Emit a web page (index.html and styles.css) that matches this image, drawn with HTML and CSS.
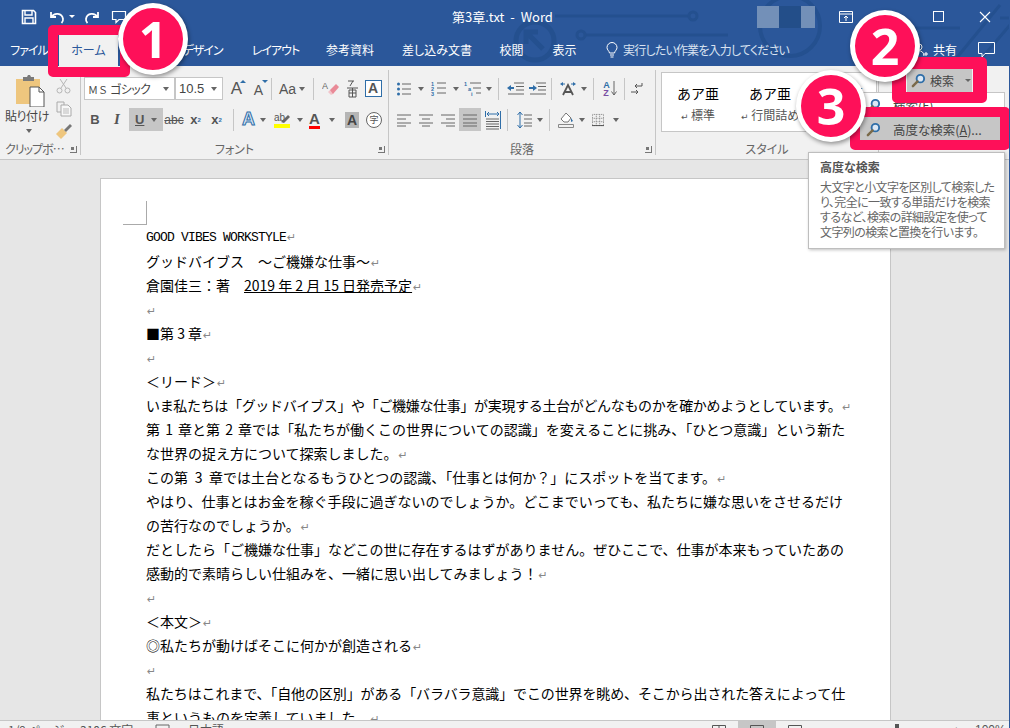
FILE: index.html

```html
<!DOCTYPE html>
<html lang="ja">
<head>
  <meta charset="UTF-8">
  <title>第3章.txt - Word</title>
  <link rel="stylesheet" href="styles.css">
</head>
<body>

<svg class="sprite" xmlns="http://www.w3.org/2000/svg">
  <symbol id="i-find" viewBox="0 0 16 16">
    <circle cx="10" cy="6" r="4" fill="#dbe7f4" stroke="#2f6ea8" stroke-width="2"/>
    <path d="M7 9 2 14" stroke="#7a6a4a" stroke-width="2.6" stroke-linecap="round"/>
  </symbol>
  <symbol id="i-left" viewBox="0 0 16 16"><path d="M1 3h14M1 7h9M1 11h14M1 14h9" stroke="#666" fill="none"/></symbol>
  <symbol id="i-center" viewBox="0 0 16 16"><path d="M1 3h14M4 7h8M1 11h14M4 14h8" stroke="#666" fill="none"/></symbol>
  <symbol id="i-right" viewBox="0 0 16 16"><path d="M1 3h14M6 7h9M1 11h14M6 14h9" stroke="#666" fill="none"/></symbol>
  <symbol id="i-just" viewBox="0 0 16 16"><path d="M1 3h14M1 7h14M1 11h14M1 14h14" stroke="#666" fill="none"/></symbol>
</svg>

<div class="app">
  <div class="head">
    <svg class="circuit" width="1010" height="66" viewBox="0 0 1010 66" fill="none" stroke="#24508f" stroke-width="3">
      <circle cx="535" cy="41" r="19" stroke-width="5"/>
      <path d="M543 49 527 33M526 44V32h12" stroke-width="5"/>
      <path d="M555 16H690M586 35H728"/>
      <circle cx="581" cy="35" r="4"/>
      <circle cx="693" cy="16" r="4"/>
      <circle cx="790" cy="26" r="30" stroke-width="4"/>
      <path d="M905 28H960M950 66 1000 5M975 66 1010 25M1000 18h10"/>
    </svg>
    <header class="titlebar">
      <div class="qat">
        <svg class="qat-save" width="16" height="16" viewBox="0 0 16 16"><path d="M1.500 1.500h11l2 2v11h-13z" fill="none" stroke="#fff" stroke-width="1.6"/><path d="M4 2v4h7V2M4 14V9h8v5" fill="none" stroke="#fff" stroke-width="1.4"/></svg>
        <svg class="qat-undo" width="16" height="16" viewBox="0 0 16 16"><path d="M2 3v5h5M2.500 8C5 3.500 13 3.500 14 10c.2 1.500-.5 3-1.500 4" fill="none" stroke="#fff" stroke-width="1.8"/></svg>
        <span class="caret caret-white qat-caret"></span>
        <svg class="qat-redo" width="16" height="16" viewBox="0 0 16 16"><path d="M14 3v5H9M13.500 8C11 3.500 3 3.500 2 10c-.2 1.500.5 3 1.500 4" fill="none" stroke="#fff" stroke-width="1.8"/></svg>
        <svg class="qat-touch" width="16" height="16" viewBox="0 0 16 16"><path d="M1.500 2.500h13v8H8l-3 3v-3H1.500z" fill="none" stroke="#fff" stroke-width="1.200"/></svg>
      </div>
      <div class="doc-title">第3章.txt&nbsp; - &nbsp;Word</div>
      <div class="account"><i class="blur-a"></i><i class="blur-b"></i><i class="blur-a narrow"></i></div>
      <div class="winctl">
        <svg width="14" height="12" viewBox="0 0 14 12"><path d="M.5.500h13v11H.5zM.5 3h13M7 10V5M5 7l2-2 2 2" fill="none" stroke="#fff"/></svg>
        <svg class="win-max" width="11" height="11" viewBox="0 0 11 11"><rect x=".5" y=".5" width="10" height="10" fill="none" stroke="#fff"/></svg>
        <svg class="win-close" width="12" height="12" viewBox="0 0 12 12"><path d="M1 1l10 10M11 1 1 11" stroke="#fff" stroke-width="1.100"/></svg>
      </div>
    </header>

    <nav class="tabs">
      <span class="tab t-file kana">ファイル</span>
      <span class="tab t-home active">ホーム</span>
      <span class="tab t-ins">挿入</span>
      <span class="tab t-des kana">デザイン</span>
      <span class="tab t-lay kana">レイアウト</span>
      <span class="tab t-ref">参考資料</span>
      <span class="tab t-mail">差し込み文書</span>
      <span class="tab t-rev">校閲</span>
      <span class="tab t-view">表示</span>
      <span class="tell">
        <svg width="12" height="16" viewBox="0 0 12 16"><path d="M3.500 11C3 8.500 1 8 1 5.500a5 5 0 0 1 10 0C11 8 9 8.500 8.500 11zM4 13h4M4.500 15h3" fill="none" stroke="#fff"/></svg>
        実行したい作業を入力してください
      </span>
      <span class="share">
        <svg width="14" height="14" viewBox="0 0 14 14"><circle cx="5" cy="4" r="3" fill="none" stroke="#fff"/><path d="M0 13c0-7 10-7 10 0M10 11h4M12 9v4" fill="none" stroke="#fff"/></svg>
        共有
      </span>
      <svg class="comment" width="17" height="16" viewBox="0 0 17 16"><path d="M.5.500h16v11H7l-3 3.500v-3.500H.5z" fill="none" stroke="#fff"/></svg>
    </nav>
  </div>

  <section class="ribbon">
    <div class="group g-clip">
      <div class="clip-body">
        <div class="paste">
          <svg class="paste-icon" width="30" height="32" viewBox="0 0 30 32">
            <path d="M1 4h24v25H1z" fill="#eec67e"/>
            <path d="M8 2h4l1-2h2l1 2h3v4H8z" fill="#7a7a7a"/>
            <path d="M15 12h9l5 5v15H15z" fill="#fff" stroke="#555"/>
            <path d="M24 12v5h5" fill="none" stroke="#555"/>
          </svg>
          <span class="paste-label">貼り付け</span>
          <span class="caret"></span>
        </div>
        <div class="clip-side">
          <svg width="15" height="15" viewBox="0 0 15 15"><circle cx="3.500" cy="11.500" r="2.500" fill="none" stroke="#b5b5b5"/><circle cx="11.500" cy="11.500" r="2.500" fill="none" stroke="#b5b5b5"/><path d="M5 9 11 0M10 9 4 0" stroke="#b5b5b5"/></svg>
          <svg width="16" height="16" viewBox="0 0 16 16"><path d="M1 1h7v3M1 1v10h4" fill="none" stroke="#aaa"/><path d="M5 4h7l3 3v8H5z" fill="#f8f8f8" stroke="#aaa"/><path d="M7 8h6M7 10h6M7 12h6" stroke="#bbb"/></svg>
          <svg width="16" height="15" viewBox="0 0 16 15"><path d="M6 4 0 10l5 5 6-6z" fill="#eec67e"/><path d="M8 6 14 0l2 2-6 6z" fill="#777"/></svg>
        </div>
      </div>
      <div class="group-label">クリップボ… <span class="launcher"></span></div>
    </div>

    <div class="group g-font">
      <div class="row">
        <span class="combo c-name"><span><span class="ms">ＭＳ</span> ゴシック</span><span class="caret"></span></span>
        <span class="combo c-size">10.5<span class="caret"></span></span>
        <span class="tool w21 ml3 big-a">A<b class="up"></b></span>
        <span class="tool w21 ml1 big-a small">A<b class="down"></b></span>
        <span class="sep s-d"></span>
        <span class="tool w30 aa">Aa<span class="caret"></span></span>
        <span class="sep"></span>
        <span class="tool w22">
          <svg width="17" height="16" viewBox="0 0 17 16"><path d="M8 9 14 3l3 3-6 7H8z" fill="#e98a97"/><path d="M8 9l-2 2 3 3 2-1z" fill="#f2c4ca"/><text x="0" y="8" class="svg-a">A</text></svg>
        </span>
        <span class="tool w22"><svg width="13" height="19" viewBox="0 0 13 19"><path d="M2 2h6M7 2 4 7" stroke="#555" fill="none"/><path d="M1 9h11M3 11h7v7H3zM3 14h7M6.500 9v9" stroke="#555" fill="none"/></svg></span>
        <span class="tool w20"><span class="boxed-a">A</span></span>
      </div>
      <div class="row r2">
        <span class="tool w22 fmt">B</span>
        <span class="tool w22 fmt it">I</span>
        <span class="tool w34 on fmt ul ml1"><u>U</u><span class="caret"></span></span>
        <span class="tool w22 strike">abc</span>
        <span class="tool w21 fmt sm">x<sub>2</sub></span>
        <span class="tool w21 fmt sm">x<sup>2</sup></span>
        <span class="sep"></span>
        <span class="tool w30 glow">A<span class="caret"></span></span>
        <span class="tool w34 ml2">
          <svg width="16" height="16" viewBox="0 0 16 16"><text x="0" y="9" class="svg-ab">ab</text><path d="M7 10 14 3l2 2-6 6z" fill="#666"/><path d="M0 12h16v4H0z" fill="#ff0"/></svg>
          <span class="caret"></span>
        </span>
        <span class="tool w34 color-a">
          <span class="a-red">A</span>
          <span class="caret"></span>
        </span>
        <span class="tool w22 ml2"><span class="shaded-a">A</span></span>
        <span class="ji">字</span>
      </div>
      <div class="group-label">フォント <span class="launcher"></span></div>
    </div>

    <div class="group g-para">
      <div class="row">
        <span class="tool w34 left">
          <svg width="14" height="14" viewBox="0 0 14 14"><path d="M5 2h9M5 7h9M5 12h9" stroke="#666"/><circle cx="1.500" cy="2" r="1.500" fill="#2f6ea8"/><circle cx="1.500" cy="7" r="1.500" fill="#2f6ea8"/><circle cx="1.500" cy="12" r="1.500" fill="#2f6ea8"/></svg>
          <span class="caret"></span>
        </span>
        <span class="tool w33 left">
          <svg width="15" height="15" viewBox="0 0 15 15"><path d="M6 2h9M6 7h9M6 12h9" stroke="#666"/><text x="0" y="4.500" class="svg-n">1</text><text x="0" y="9.500" class="svg-n">2</text><text x="0" y="14.500" class="svg-n">3</text></svg>
          <span class="caret"></span>
        </span>
        <span class="tool w32 left">
          <svg width="17" height="16" viewBox="0 0 17 16"><path d="M6 2h11M9 7h8M12 12h5" stroke="#666"/><text x="0" y="4.500" class="svg-n">1</text><text x="4" y="9.500" class="svg-n">a</text><text x="7" y="15" class="svg-n">i</text></svg>
          <span class="caret tight"></span>
        </span>
        <span class="sep s-a"></span>
        <span class="tool w22">
          <svg width="17" height="13" viewBox="0 0 17 13"><path d="M7 1h10M9 4.500h8M9 8h8M1 12h16" stroke="#666"/><path d="M0 6l4-3v6z" fill="#2f6ea8"/><path d="M3 6h4" stroke="#2f6ea8" stroke-width="2"/></svg>
        </span>
        <span class="tool w22">
          <svg width="17" height="13" viewBox="0 0 17 13"><path d="M7 1h10M9 4.500h8M9 8h8M1 12h16" stroke="#666"/><path d="M8 6 4 3v6z" fill="#2f6ea8"/><path d="M0 6h5" stroke="#2f6ea8" stroke-width="2"/></svg>
        </span>
        <span class="sep s-b"></span>
        <span class="tool w30 left">
          <svg width="16" height="15" viewBox="0 0 16 15"><path d="M3 14 8 4l5 10M5 11h6" stroke="#555" stroke-width="1.800" fill="none"/><path d="M0 3l3-2v4zM16 3l-3-2v4z" fill="#2f6ea8"/><path d="M3 3h2M11 3h2" stroke="#2f6ea8"/></svg>
          <span class="caret tight"></span>
        </span>
        <span class="sep s-c"></span>
        <span class="tool w22 sort">
          <span class="az"><i>A</i><i class="z">Z</i></span>
          <svg width="6" height="15" viewBox="0 0 6 15"><path d="M3 0v14M.5 10.500 3 14l2.500-3.500" stroke="#666" fill="none"/></svg>
        </span>
        <span class="sep s-b"></span>
        <span class="tool w14">
          <svg width="12" height="13" viewBox="0 0 12 13"><path d="M11 1v3H4M6 2 4 4l2 2M0 10h7M5 8l2 2-2 2" stroke="#555" fill="none"/></svg>
        </span>
      </div>
      <div class="row r2 para-align">
        <span class="tool w22"><svg width="16" height="16"><use href="#i-left"/></svg></span>
        <span class="tool w22"><svg width="16" height="16"><use href="#i-center"/></svg></span>
        <span class="tool w22"><svg width="16" height="16"><use href="#i-right"/></svg></span>
        <span class="tool w22 on"><svg width="16" height="16"><use href="#i-just"/></svg></span>
        <span class="tool w20 ml2">
          <svg width="16" height="20" viewBox="0 0 16 20"><path d="M.5 1v6M15.500 1v18M2 4h12M4 2 2 4l2 2M12 2l2 2-2 2" stroke="#2f6ea8" fill="none"/><path d="M1 9h13M1 11.500h13M1 14h13M1 16.500h13M1 19h13" stroke="#666"/></svg>
        </span>
        <span class="sep s-e"></span>
        <span class="tool w30 left">
          <svg width="15" height="16" viewBox="0 0 15 16"><path d="M7 3h8M7 7h8M7 11h8M7 14h8" stroke="#666"/><path d="M3 0v16M.5 3 3 0l2.500 3M.5 13 3 16l2.500-3" stroke="#2f6ea8" fill="none"/></svg>
          <span class="caret tight"></span>
        </span>
        <span class="sep s-a"></span>
        <span class="tool w30 left">
          <svg width="16" height="17" viewBox="0 0 16 17"><path d="M3 8 8 2l5 5-3 4H6z" fill="#fff" stroke="#777"/><path d="M13 7l2 3-2 1z" fill="#2f6ea8"/><path d="M.5 13.500h15v3H.5z" fill="#f1f1f1" stroke="#888"/></svg>
          <span class="caret tight"></span>
        </span>
        <span class="tool w30 left border-tool">
          <svg width="14" height="14" viewBox="0 0 14 14"><path d="M.5.500h13v13H.5zM.5 5h13M.5 9h13M5 .5v13M9 .5v13" fill="none" stroke="#777" stroke-dasharray="1 1"/><path d="M0 13.500h14" stroke="#444"/></svg>
          <span class="caret"></span>
        </span>
      </div>
      <div class="group-label">段落 <span class="launcher"></span></div>
    </div>

    <div class="group g-style">
      <div class="gallery">
        <div class="style-item"><span class="style-name">あア亜</span><span class="style-sub"><small>↵</small> 標準</span></div>
        <div class="style-item"><span class="style-name">あア亜</span><span class="style-sub"><small>↵</small> 行間詰め</span></div>
        <div class="style-item"><span class="style-name">あア亜</span><span class="style-sub">見出し</span></div>
      </div>
      <div class="group-label">スタイル</div>
    </div>

    <div class="find-btn">
      <svg width="15" height="15"><use href="#i-find"/></svg>
      <span>検索</span>
      <span class="caret"></span>
    </div>
  </section>

  <main class="doc-area">
    <article class="page">
      <span class="crop"></span>
      <p class="mono">GOOD VIBES WORKSTYLE<span class="ret">↵</span></p>
      <p>グッドバイブス　～ご機嫌な仕事～<span class="ret">↵</span></p>
      <p>倉園佳三：著　<u>2019 年 2 月 15 日発売予定</u><span class="ret">↵</span></p>
      <p><span class="ret">↵</span></p>
      <p>■第 3 章<span class="ret">↵</span></p>
      <p><span class="ret">↵</span></p>
      <p>＜リード＞<span class="ret">↵</span></p>
      <p class="squeeze">いま私たちは「グッドバイブス」や「ご機嫌な仕事」が実現する土台がどんなものかを確かめようとしています。<span class="ret">↵</span></p>
      <p class="ws-2">第 1 章と第 2 章では「私たちが働くこの世界についての認識」を変えることに挑み、「ひとつ意識」という新た</p>
      <p>な世界の捉え方について探索しました。<span class="ret">↵</span></p>
      <p class="ws-3">この第 3 章では土台となるもうひとつの認識、「仕事とは何か？」にスポットを当てます。<span class="ret">↵</span></p>
      <p>やはり、仕事とはお金を稼ぐ手段に過ぎないのでしょうか。どこまでいっても、私たちに嫌な思いをさせるだけ</p>
      <p>の苦行なのでしょうか。<span class="ret">↵</span></p>
      <p>だとしたら「ご機嫌な仕事」などこの世に存在するはずがありません。ぜひここで、仕事が本来もっていたあの</p>
      <p>感動的で素晴らしい仕組みを、一緒に思い出してみましょう！<span class="ret">↵</span></p>
      <p><span class="ret">↵</span></p>
      <p>＜本文＞<span class="ret">↵</span></p>
      <p>◎私たちが動けばそこに何かが創造される<span class="ret">↵</span></p>
      <p><span class="ret">↵</span></p>
      <p class="squeeze-sm">私たちはこれまで、「自他の区別」がある「バラバラ意識」でこの世界を眺め、そこから出された答えによって仕</p>
      <p>事というものを定義していました。<span class="ret">↵</span></p>
    </article>
  </main>

  <footer class="statusbar">
    <span class="st-page">1/9 ページ</span>
    <span class="st-words">3106 文字</span>
    <svg class="st-proof" width="15" height="15" viewBox="0 0 15 15"><path d="M1 1h13v13H1z" fill="none" stroke="#666"/></svg>
    <span class="st-lang">日本語</span>
    <span class="view"><svg width="14" height="14" viewBox="0 0 14 14"><path d="M.5.500h13v13H.5zM7 .5v13" fill="none" stroke="#555"/></svg></span>
    <span class="view on"><svg width="14" height="14" viewBox="0 0 14 14"><path d="M.5.500h13v13H.5zM3 4h8" fill="none" stroke="#555"/></svg></span>
    <span class="view"><svg width="14" height="14" viewBox="0 0 14 14"><path d="M.5.500h13v13H.5zM3 4h8" fill="none" stroke="#555"/></svg></span>
    <span class="zoom-thumb"></span>
    <span class="zoom-plus">+</span>
    <span class="zoom-pct">100%</span>
  </footer>

  <!-- pulldown and tooltip over the ribbon -->
  <div class="find-menu">
    <div class="menu-item"><svg width="15" height="15"><use href="#i-find"/></svg><span>検索(F)</span></div>
    <div class="menu-item hot"><svg width="15" height="15"><use href="#i-find"/></svg><span>高度な検索(<u>A</u>)...</span></div>
  </div>
  <div class="tip">
    <h4>高度な検索</h4>
    <p>大文字と小文字を区別して検索した<br>り、完全に一致する単語だけを検索<br>するなど、検索の詳細設定を使って<br>文字列の検索と置換を行います。</p>
  </div>

  <!-- call-outs -->
  <span class="frame f-home"></span>
  <span class="frame f-find"></span>
  <span class="frame f-adv"></span>
  <span class="badge b1">1</span>
  <span class="badge b2">2</span>
  <span class="badge b3">3</span>
</div>

</body>
</html>
```

FILE: styles.css

```css
* {
  box-sizing: border-box;
}
html, body {
  margin: 0;
  height: 728px;
  overflow: hidden;
}
body {
  font-family: "Noto Sans CJK JP", "Noto Sans", sans-serif;
  font-size: 12px;
  color: #444;
  font-feature-settings: "palt";
}
.sprite {
  display: none;
}
.app {
  position: relative;
  width: 1010px;
  height: 728px;
  overflow: hidden;
  display: flex;
  flex-direction: column;
  background: #e6e6e6;
  border-right: 1px solid #2b579a;
}

/* title bar */
.head {
  position: relative;
  flex: none;
  background: #2b579a;
}
.circuit {
  position: absolute;
  left: 0;
  top: 0;
}
.titlebar {
  position: relative;
  height: 33px;
  display: flex;
  align-items: center;
  color: #fff;
}
.qat {
  width: 452px;
  display: flex;
  align-items: center;
  padding-left: 21px;
}
.qat-undo {
  margin-left: 12px;
}
.qat-caret {
  margin-left: 4px;
}
.qat-redo {
  margin-left: 9px;
}
.qat-touch {
  margin-left: 11px;
}
.doc-title {
  font-size: 13px;
  width: 305px;
  white-space: nowrap;
}
.account {
  display: flex;
  height: 22px;
}
.account i {
  display: block;
  width: 22px;
}
.blur-a {
  background: #7390b8;
}
.account .narrow {
  width: 14px;
}
.blur-b {
  background: #234e89;
}
.winctl {
  display: flex;
  align-items: center;
  margin-left: 24px;
}
.win-max {
  margin-left: 80px;
}
.win-close {
  margin-left: 35px;
}

/* tabs */
.tabs {
  position: relative;
  height: 33px;
  display: flex;
  align-items: center;
  color: #fff;
}
.tab {
  height: 33px;
  line-height: 33px;
  text-align: center;
  white-space: nowrap;
  flex: none;
}
.kana {
  letter-spacing: -1px;
}
.t-file { width: 58px; }
.t-home { width: 60px; }
.t-ins { width: 53px; }
.t-des { width: 75px; margin-left: -6px; }
.t-lay { width: 71px; }
.t-ref { width: 78px; }
.t-mail { width: 96px; }
.t-rev { width: 53px; }
.t-view { width: 53px; }
.tab.active {
  background: #f1f1f1;
  color: #2b579a;
  border-left: 1px solid #2b579a;
}
.tell {
  display: flex;
  align-items: center;
  gap: 5px;
  margin-left: 15px;
  color: #d9e2f0;
  white-space: nowrap;
  width: 190px;
  letter-spacing: -.8px;
}
.share {
  display: flex;
  align-items: center;
  gap: 5px;
  margin-left: 118px;
  white-space: nowrap;
}
.comment {
  margin-left: 21px;
}

/* ribbon */
.ribbon {
  position: relative;
  flex: none;
  height: 94px;
  display: flex;
  background: #f1f1f1;
  border-bottom: 1px solid #c6c6c6;
  padding-top: 4px;
}
.group {
  position: relative;
  flex: none;
  height: 85px;
  padding-top: 7px;
  border-right: 1px solid #c6c6c6;
}
.g-clip { width: 81px; }
.g-font { width: 308px; padding-left: 3px; }
.g-para { width: 267px; padding-left: 5px; }
.g-style { width: 223px; padding-top: 2px; padding-left: 5px; }
.group-label {
  position: absolute;
  left: 0;
  right: 0;
  bottom: -3px;
  height: 18px;
  line-height: 18px;
  text-align: center;
  color: #666;
  white-space: nowrap;
}
.launcher {
  position: absolute;
  right: 3px;
  top: 6px;
  width: 7px;
  height: 7px;
  border-right: 1px solid #777;
  border-bottom: 1px solid #777;
}
.launcher::after {
  content: "";
  position: absolute;
  left: 1px;
  top: 1px;
  width: 3px;
  height: 3px;
  background: #777;
}
.g-clip .group-label {
  text-align: left;
  padding-left: 5px;
  letter-spacing: -1px;
}
.clip-body {
  display: flex;
}
.paste {
  width: 54px;
  display: flex;
  flex-direction: column;
  align-items: center;
  margin-top: -2px;
}
.paste-icon {
  margin-left: 6px;
}
.paste-label {
  line-height: 17px;
  white-space: nowrap;
  color: #444;
  letter-spacing: -.4px;
}
.paste .caret {
  margin-top: 5px;
  margin-left: 3px;
}
.clip-side {
  display: flex;
  flex-direction: column;
  gap: 7px;
  padding-top: 2px;
  margin-left: 2px;
}
.row {
  display: flex;
  align-items: center;
  height: 23px;
}
.r2 {
  margin-top: 8px;
}
.para-align {
  margin-left: -1px;
}
.tool {
  flex: none;
  height: 23px;
  display: flex;
  align-items: center;
  justify-content: center;
  color: #555;
  white-space: nowrap;
}
.tool .caret {
  margin-left: 7px;
}
.tool .tight {
  margin-left: 5px;
}
.left {
  justify-content: flex-start;
  padding-left: 3px;
}
.border-tool {
  margin-left: 4px;
}
.border-tool .caret {
  margin-left: 9px;
}
.w14 { width: 14px; }
.w20 { width: 20px; }
.w21 { width: 21px; }
.w22 { width: 22px; }
.w30 { width: 30px; }
.w32 { width: 32px; }
.w33 { width: 33px; }
.w34 { width: 34px; }
.ml1 { margin-left: 1px; }
.ml2 { margin-left: 2px; }
.ml3 { margin-left: 3px; }
.on {
  background: #c6c6c6;
}
.sep {
  flex: none;
  width: 1px;
  height: 22px;
  margin: 0 5px 0 6px;
  background: #c6c6c6;
}
.s-a { margin: 0 5px; }
.s-b { margin: 0 5px 0 3px; }
.s-c { margin: 0 5px 0 6px; }
.s-d { margin: 0 5px 0 2px; }
.s-e { margin: 0 6px 0 4px; }
.caret {
  display: inline-block;
  width: 0;
  height: 0;
  border-left: 3.500px solid transparent;
  border-right: 3.500px solid transparent;
  border-top: 4px solid #666;
}
.caret-white {
  border-top-color: #fff;
  border-left-width: 3px;
  border-right-width: 3px;
  border-top-width: 3px;
}
.combo {
  flex: none;
  height: 23px;
  display: flex;
  align-items: center;
  justify-content: space-between;
  background: #fff;
  border: 1px solid #c6c6c6;
  padding: 0 5px 0 3px;
  font-size: 13px;
  color: #444;
  white-space: nowrap;
}
.c-name {
  width: 91px;
  font-size: 12px;
  letter-spacing: -.6px;
}
.ms {
  font-size: 10px;
  letter-spacing: 0;
  font-feature-settings: normal;
}
.c-size {
  width: 48px;
  font-family: "Liberation Sans", sans-serif;
}
.big-a {
  font: 17px "Liberation Sans", sans-serif;
  position: relative;
}
.big-a.small {
  font-size: 14px;
  padding-top: 3px;
}
.up, .down {
  position: absolute;
  right: 1px;
  top: 3px;
  width: 0;
  height: 0;
  border-left: 3px solid transparent;
  border-right: 3px solid transparent;
}
.up {
  border-bottom: 3px solid #2f6ea8;
}
.down {
  border-top: 3px solid #2f6ea8;
}
.aa {
  font: 14px "Liberation Sans", sans-serif;
}
.aa .caret {
  margin-left: 3px;
}
.svg-a {
  font: 9px "Liberation Sans", sans-serif;
  fill: #666;
}
.svg-ab {
  font: 10px "Liberation Sans", sans-serif;
  fill: #555;
}
.svg-n {
  font: bold 5.500px "Liberation Sans", sans-serif;
  fill: #2f6ea8;
}
.boxed-a {
  width: 17px;
  height: 17px;
  text-align: center;
  border: 1px solid #2f6ea8;
  background: #fff;
  font: bold 14px/15px "Liberation Sans", sans-serif;
  color: #555;
}
.fmt {
  font: bold 13px "Liberation Sans", sans-serif;
}
.it {
  font-style: italic;
  font-family: "Liberation Serif", serif;
  font-size: 15px;
}
.ul {
  justify-content: flex-start;
  padding-left: 6px;
}
.sm sub, .sm sup {
  font-size: 6px;
  color: #2f6ea8;
}
.strike {
  font: 12px "Liberation Sans", sans-serif;
  text-decoration: line-through;
}
.glow {
  font: bold 18px "Liberation Sans", sans-serif;
  color: #dbe7f4;
  -webkit-text-stroke: 1px #2f6ea8;
}
.glow .caret {
  margin-left: 5px;
}
.color-a .caret {
  margin-left: 9px;
}
.a-red {
  font: bold 15px/15px "Liberation Sans", sans-serif;
  color: #555;
  border-bottom: 3px solid #f00;
}
.shaded-a {
  width: 14px;
  height: 16px;
  text-align: center;
  background: #b5b5b5;
  font: bold 14px/16px "Liberation Sans", sans-serif;
  color: #444;
}
.ji {
  flex: none;
  width: 16px;
  height: 16px;
  margin-left: 3px;
  border: 1px solid #666;
  border-radius: 50%;
  background: #fff;
  font-size: 9px;
  line-height: 14px;
  text-align: center;
  color: #555;
}
.sort {
  gap: 1px;
}
.az {
  display: flex;
  flex-direction: column;
  font: bold 9px/8px "Liberation Sans", sans-serif;
  color: #2f6ea8;
}
.az i {
  font-style: normal;
}
.az .z {
  color: #7a4fa3;
}

/* styles gallery */
.gallery {
  display: flex;
  width: 216px;
  height: 60px;
  background: #fff;
  border: 1px solid #c6c6c6;
}
.style-item {
  flex: none;
  width: 72px;
  display: flex;
  flex-direction: column;
  align-items: center;
  padding-top: 10px;
}
.style-name {
  font-size: 14px;
  line-height: 20px;
  color: #000;
  font-feature-settings: normal;
  white-space: nowrap;
}
.style-sub {
  margin-top: 4px;
  line-height: 16px;
  color: #555;
  white-space: nowrap;
}
.style-sub small {
  font: 9px "DejaVu Sans", sans-serif;
}
.find-btn {
  flex: none;
  width: 65px;
  height: 23px;
  margin: -1px 0 0 28px;
  display: flex;
  align-items: center;
  gap: 4px;
  padding-left: 4px;
  background: #c6c6c6;
  color: #444;
  white-space: nowrap;
}
.find-btn .caret {
  margin-left: 7px;
  border-top-width: 3px;
  border-left-width: 3px;
  border-right-width: 3px;
}

/* document */
.doc-area {
  flex: none;
  height: 560px;
  padding: 18px 0 0 100px;
  overflow: hidden;
  background: #e6e6e6;
}
.page {
  position: relative;
  width: 791px;
  height: 700px;
  padding: 46px 0 0 45px;
  background: #fff;
  border: 1px solid #c6c6c6;
  color: #000;
  font-size: 14px;
  font-feature-settings: normal;
}
.page p {
  margin: 0;
  height: 24px;
  line-height: 24px;
  white-space: nowrap;
}
.page .mono {
  font-family: "Liberation Mono", monospace;
  font-size: 13px;
  line-height: 26px;
  letter-spacing: -.8px;
}
.squeeze {
  letter-spacing: -.33px;
}
.squeeze-sm {
  letter-spacing: -.12px;
}
.ws-2 {
  word-spacing: 2px;
}
.ws-3 {
  word-spacing: 3.500px;
}
.ret {
  font: 11px "DejaVu Sans", sans-serif;
  color: #888;
  letter-spacing: 0;
  margin-left: 1px;
}
.crop {
  position: absolute;
  left: 22px;
  top: 22px;
  width: 24px;
  height: 24px;
  border-right: 1px solid #aaa;
  border-bottom: 1px solid #aaa;
}

/* status bar */
.statusbar {
  flex: none;
  height: 24px;
  display: flex;
  align-items: flex-start;
  background: #f1f1f1;
  border-top: 1px solid #c6c6c6;
  color: #555;
  line-height: 18px;
  white-space: nowrap;
}
.st-page { margin-left: 8px; width: 72px; }
.st-words { width: 75px; }
.st-proof { margin-top: 3px; }
.st-lang { margin-left: 18px; width: 512px; }
.view {
  width: 38px;
  height: 23px;
  display: flex;
  justify-content: center;
  padding-top: 4px;
}
.zoom-thumb {
  width: 4px;
  height: 10px;
  margin: 3px 0 0 81px;
  background: #555;
}
.zoom-plus {
  margin-left: 54px;
  width: 22px;
}
.zoom-pct {
  font-family: "Liberation Sans", sans-serif;
}

/* overlays */
.find-menu {
  position: absolute;
  left: 860px;
  top: 92px;
  width: 145px;
  height: 58px;
  background: #fff;
  border: 1px solid #c6c6c6;
}
.menu-item {
  height: 24px;
  display: flex;
  align-items: center;
  gap: 12px;
  padding-left: 5px;
  color: #444;
  font-size: 12.500px;
  white-space: nowrap;
}
.menu-item.hot {
  background: #c6c6c6;
}
.tip {
  position: absolute;
  left: 808px;
  top: 152px;
  width: 197px;
  height: 97px;
  padding: 5px 11px;
  background: #fff;
  border: 1px solid #bebebe;
  box-shadow: 1px 1px 3px rgba(0, 0, 0, .25);
  color: #666;
  line-height: 15px;
}
.tip h4 {
  margin: 0 0 3px;
  font-size: 12px;
  line-height: 18px;
  color: #555;
}
.tip p {
  margin: 0;
  white-space: nowrap;
  letter-spacing: -.6px;
}
.frame {
  position: absolute;
  border: 10px solid #fe1059;
  border-radius: 5px;
}
.f-home { left: 48px; top: 25px; width: 82px; height: 52px; }
.f-find { left: 892px; top: 57px; width: 95px; height: 46px; border-width: 12px 14px 11px 14px; }
.f-adv { left: 850px; top: 107px; width: 160px; height: 43px; }
.badge {
  position: absolute;
  width: 70px;
  height: 72px;
  border: 5px solid #fff;
  border-radius: 50%;
  background: #fe1059;
  box-shadow: 1px 2px 4px rgba(0, 0, 0, .4);
  color: #fff;
  font: bold 50px/62px "Open Sans", sans-serif;
  text-align: center;
}
.b1 { left: 118px; top: 3px; }
.b2 { left: 850px; top: 10px; }
.b3 { left: 796px; top: 70px; }
```
